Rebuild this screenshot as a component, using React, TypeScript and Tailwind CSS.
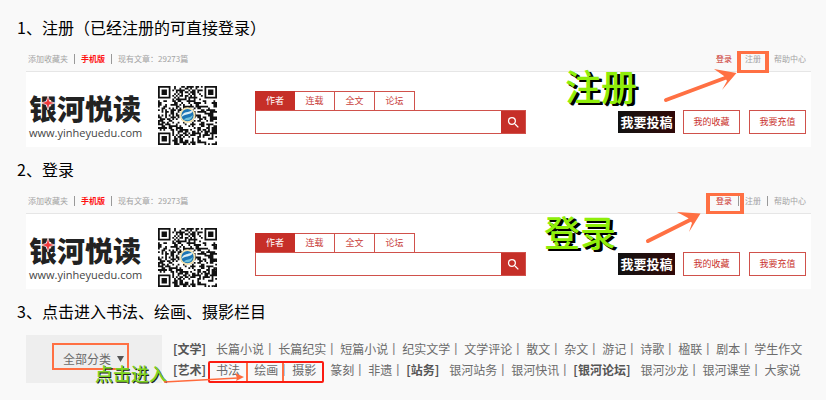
import React from "react";
import { MdSearch } from "react-icons/md";

const QR_SIZE = 33;

// finder squares in three corners, a fixed noise pattern elsewhere
const isDark = (x: number, y: number) => {
  const far = QR_SIZE - 7;
  const corners = [
    [0, 0],
    [far, 0],
    [0, far],
  ];
  for (const [cx, cy] of corners) {
    const dx = x - cx;
    const dy = y - cy;
    if (dx >= -1 && dx <= 7 && dy >= -1 && dy <= 7) {
      const ring = Math.max(Math.abs(dx - 3), Math.abs(dy - 3));
      return ring === 3 || ring <= 1;
    }
  }
  let n = (x * 374761393 + y * 668265263) | 0;
  n = Math.imul(n ^ (n >>> 13), 1274126177);
  return ((n ^ (n >>> 16)) & 255) < 134;
};

const qrPath = () => {
  let d = "";
  for (let y = 0; y < QR_SIZE; y++) {
    for (let x = 0; x < QR_SIZE; x++) {
      if (isDark(x, y)) d += `M${x} ${y}h1v1h-1z`;
    }
  }
  return d;
};

const QrCode: React.FC = () => (
  <svg viewBox="0 0 33 33" className="mt-[14px] ml-4 size-[59px] shrink-0" aria-hidden="true">
    <path d={qrPath()} fill="#111" />
    <circle cx="16.5" cy="16.3" r="4.4" fill="#f3e3b0" />
    <circle cx="16.5" cy="16.3" r="3.4" fill="#1b75b5" />
    <path d="M13.2 17.4c.6-3.6 4-2 6.2-4.2.2 3.4-4 2-6.2 4.2z" fill="#d9eef5" />
    <path d="M14.4 18.8c2-1.8 3.4-.6 5-2.6-.2 2.6-2.6 3.6-5 2.6z" fill="#6fc0d8" />
  </svg>
);

const Divider: React.FC = () => <span className="h-[10px] w-px bg-[#999]" />;

const tabs = ["作者", "连载", "全文", "论坛"];

type SiteHeaderProps = {
  mark: "login" | "register";
};

const SiteHeader: React.FC<SiteHeaderProps> = ({ mark }) => {
  const register = mark === "register";
  return (
    <section className="relative ml-[26px] mr-[15px]">
      <header className="flex h-[21px] items-center justify-between border-b border-[#e6e6e6] pr-[5px] pb-1 pl-[2px] text-[8px] leading-4 whitespace-nowrap text-[#a3a3a3]">
        <div className="flex items-center gap-[6px]">
          <a href="#fav">添加收藏夹</a>
          <Divider />
          <a href="#mobile" className="font-bold text-[#ff1010]">
            手机版
          </a>
          <Divider />
          <span>现有文章：29273篇</span>
        </div>
        <nav className="flex items-center gap-[6px]">
          <a href="#login" className="relative text-[#c9302c]">
            登录
            {!register && (
              <span className="absolute top-0 -right-3 -left-[10px] h-[21px] border-x-4 border-y-3 border-[#ff7043]" />
            )}
          </a>
          <Divider />
          <a href="#register" className="relative">
            注册
            {register && (
              <span className="absolute top-0 -right-2 -left-2 h-[22px] border-x-4 border-y-3 border-[#ff7043]" />
            )}
          </a>
          <Divider />
          <a href="#help">帮助中心</a>
        </nav>
      </header>

      <div className="flex h-[75px] items-start bg-white pl-[3px] whitespace-nowrap">
        <a href="#home" className="relative mt-5 w-[113px] shrink-0 text-[#222]">
          <span className="block text-[28px] leading-8 font-black">银河悦读</span>
          <span className="block font-['Open_Sans'] text-[11px] leading-[18px] text-[#444]">
            www.yinheyuedu.com
          </span>
          <svg viewBox="0 0 12 12" className="absolute top-1 left-3 size-[14px]" aria-hidden="true">
            <path
              d="M6 0 7.4 4.6 12 6 7.4 7.4 6 12 4.6 7.4 0 6 4.6 4.6z"
              fill="#f0383a"
              stroke="#fff"
              strokeWidth="0.6"
            />
          </svg>
        </a>
        <QrCode />

        <form className="mt-[19px] ml-[38px] w-[271px] shrink-0">
          <div className="flex">
            {tabs.map((tab, i) => (
              <button
                key={tab}
                type="button"
                className={
                  i === 0
                    ? "h-[19px] w-10 bg-[#c62f28] text-[9px] text-white"
                    : "h-[19px] w-10 border-t border-r border-[#d0514b] text-[9px] text-[#c9403a]"
                }
              >
                {tab}
              </button>
            ))}
          </div>
          <div className="flex h-6 border border-[#d0514b]">
            <input aria-label="搜索" className="min-w-0 flex-1 bg-white px-2 text-[9px] outline-none" />
            <button
              type="submit"
              aria-label="搜索"
              className="flex w-6 items-center justify-center bg-[#c62f28] text-white"
            >
              <MdSearch className="size-[15px]" />
            </button>
          </div>
        </form>

        <div className="mt-[38px] mr-[5px] ml-auto flex items-center gap-2">
          <button className="h-[22px] w-[57px] bg-gradient-to-r from-[#111] to-[#300808] text-[13px] font-bold text-white">
            我要投稿
          </button>
          <button className="h-6 w-[57px] border border-[#d0514b] text-[9px] text-[#c9302c]">
            我的收藏
          </button>
          <button className="ml-px h-6 w-[57px] border border-[#d0514b] text-[9px] text-[#c9302c]">
            我要充值
          </button>
        </div>
      </div>

      <strong
        className={
          register
            ? "absolute top-[14px] right-[174px] text-[36px] leading-10 font-medium text-[#8fee0a] [text-shadow:2px_2px_0_#000,3px_2px_0_#000]"
            : "absolute top-[18px] right-[195px] text-[36px] leading-10 font-medium text-[#8fee0a] [text-shadow:2px_2px_0_#000,3px_2px_0_#000]"
        }
      >
        {register ? "注册" : "登录"}
      </strong>
      {register ? (
        <svg viewBox="0 0 76 36" className="absolute top-[17px] right-[74px] h-9 w-[76px]" aria-hidden="true">
          <path d="M5 32 64 10" stroke="#ff7043" strokeWidth="4" strokeLinecap="round" />
          <path d="M75.5 5 53 1 63 8 66 13 61 22z" fill="#ff7043" />
        </svg>
      ) : (
        <svg viewBox="0 0 60 36" className="absolute top-[17px] right-[108px] h-9 w-[60px]" aria-hidden="true">
          <path d="M5 31 47 10" stroke="#ff7043" strokeWidth="4" strokeLinecap="round" />
          <path d="M57.5 3.5 34 2 45 8 49 13 46 22z" fill="#ff7043" />
        </svg>
      )}
    </section>
  );
};

type Group = { title: string; items: string[] };

const rows: Group[][] = [
  [
    {
      title: "文学",
      items: [
        "长篇小说",
        "长篇纪实",
        "短篇小说",
        "纪实文学",
        "文学评论",
        "散文",
        "杂文",
        "游记",
        "诗歌",
        "楹联",
        "剧本",
        "学生作文",
      ],
    },
  ],
  [
    { title: "艺术", items: ["书法", "绘画", "摄影", "篆刻", "非遗"] },
    { title: "站务", items: ["银河站务", "银河快讯"] },
    { title: "银河论坛", items: ["银河沙龙", "银河课堂", "大家说"] },
  ],
];

// no bar is drawn after these
const noBar = ["书法", "摄影", "学生作文", "大家说"];

const Categories: React.FC = () => (
  <section className="relative mr-[15px] ml-[26px] flex h-12 text-[12px] whitespace-nowrap text-[#6b6b6b]">
    <div className="w-[136px] shrink-0 bg-[#eee] pt-2 pl-[26px]">
      <button className="flex h-[27px] w-[77px] items-center gap-[6px] border-2 border-[#ff7043] pt-1 pl-[9px]">
        全部分类
        <svg viewBox="0 0 7 6" className="h-[6px] w-[7px] shrink-0" aria-hidden="true">
          <path d="M0 0h7L3.5 6z" fill="#555" />
        </svg>
      </button>
    </div>
    <nav className="pt-[3px] pl-[11px] leading-[21px]">
      {rows.map((groups, r) => (
        <div key={r} className="flex">
          {groups.map((group) => (
            <React.Fragment key={group.title}>
              <b className="mr-[10px] text-[#555]">[{group.title}]</b>
              {group.items.map((item) => (
                <React.Fragment key={item}>
                  <a href={`#${item}`}>{item}</a>
                  <span className="w-[14px] pl-1 font-['Liberation_Sans'] text-[#777]">
                    {noBar.includes(item) ? "" : "|"}
                  </span>
                </React.Fragment>
              ))}
            </React.Fragment>
          ))}
        </div>
      ))}
    </nav>
    <span className="absolute top-[26px] left-[220px] h-[22px] w-[38px] border-2 border-[#ff7043]" />
    <span className="absolute top-[26px] left-[182px] h-[22px] w-[116px] rounded-xs border-2 border-[#fb1c12]" />
    <strong className="absolute top-[26px] left-[69px] text-[18px] leading-6 font-medium text-[#7ed321] [text-shadow:1px_1px_0_#222]">
      点击进入
    </strong>
    <svg viewBox="0 0 82 12" className="absolute top-[37px] left-[138px] h-3 w-[82px]" aria-hidden="true">
      <path d="M0 10 74 6" stroke="#ff6a3c" strokeWidth="1.6" />
      <path d="M80 5 71 1 73 6 72 9z" fill="#ff6a3c" />
    </svg>
  </section>
);

const Step: React.FC<{ children: React.ReactNode }> = ({ children }) => (
  <h2 className="pb-[2px] pl-[17px] text-[16px] leading-[44px] text-black">{children}</h2>
);

const App: React.FC = () => {
  return (
    <main className="min-h-screen bg-[#f9f9f9] pt-[5px] font-['Noto_Sans_CJK_SC',sans-serif]">
      <Step>1、注册（已经注册的可直接登录）</Step>
      <SiteHeader mark="register" />
      <Step>2、登录</Step>
      <SiteHeader mark="login" />
      <Step>3、点击进入书法、绘画、摄影栏目</Step>
      <Categories />
    </main>
  );
};

export default App;
